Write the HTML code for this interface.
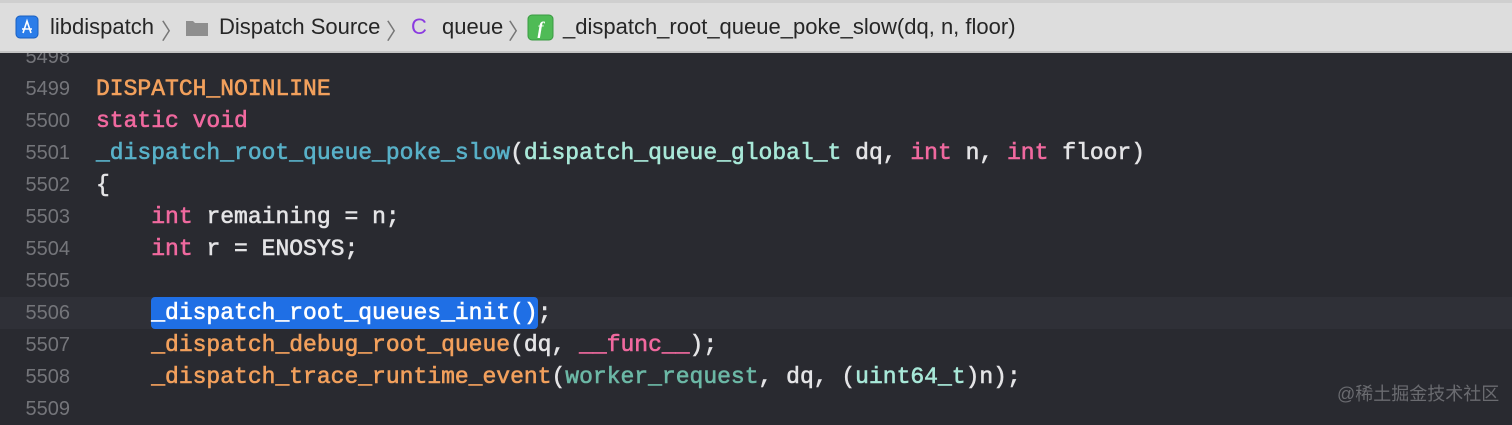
<!DOCTYPE html>
<html><head><meta charset="utf-8"><style>
html,body{margin:0;padding:0}
body{width:1512px;height:420px;overflow:hidden;background:#292a30;position:relative;font-family:"Liberation Sans",sans-serif}
#hdr{position:absolute;left:0;top:0;width:1512px;height:53px;background:#dddddd;border-top:3px solid #cfcfcf;box-sizing:border-box;border-bottom:2px solid #c4c4c4;z-index:2;font-size:22px;color:#262626}
#hdr span{position:absolute;top:11px;white-space:nowrap}
.code{position:absolute;left:0;top:41px;width:1512px;font-family:"Liberation Mono",monospace;font-size:23px;line-height:32px;color:#e4e4e6;font-weight:normal;-webkit-text-stroke:0.6px currentColor}
.ln{position:absolute;left:0;width:70px;text-align:right;color:#74757a;font-family:"Liberation Sans",sans-serif;font-size:20px;-webkit-text-stroke:0}
.tx{position:absolute;left:96px;white-space:pre}
.o{color:#f2a05c}.p{color:#f0699f}.t{color:#a8e8d8}.f{color:#58b1c8}.g{color:#6cb8a6}
.sel{background:#1f6fe5;color:#fff;border-radius:4px}
</style></head><body>
<div id="hdr">
<svg style="position:absolute;left:15px;top:12px" width="24" height="24"><rect x="1" y="1" width="22" height="22" rx="4" fill="#2b7de9" stroke="#1a5fc0"/><path d="M8 18 L12 6 L16 18 M7 14 H17" stroke="#fff" stroke-width="1.6" fill="none"/></svg>
<span style="left:50px">libdispatch</span>
<span style="left:161px;color:#777">〉</span>
<svg style="position:absolute;left:185px;top:15px" width="24" height="20"><path d="M1 3h7l2 2h13v13H1z" fill="#8e8e8e"/></svg>
<span style="left:219px">Dispatch Source</span>
<span style="left:386px;color:#777">〉</span>
<span style="left:411px;color:#8a3ae0">C</span>
<span style="left:442px">queue</span>
<span style="left:508px;color:#777">〉</span>
<svg style="position:absolute;left:527px;top:11px" width="27" height="27"><rect x="1" y="1" width="25" height="25" rx="4" fill="#4fbb56" stroke="#3a9a42"/><text x="13.5" y="20" font-family="Liberation Serif" font-style="italic" font-weight="bold" font-size="18" fill="#fff" text-anchor="middle">f</text></svg>
<span style="left:563px">_dispatch_root_queue_poke_slow(dq, n, floor)</span>
</div>
<div style="position:absolute;left:0;top:297px;width:1512px;height:32px;background:#2f3037"></div>
<div class="code">
<div class="ln" style="top:0">5498</div>
<div class="ln" style="top:32px">5499</div><div class="tx o" style="top:32px">DISPATCH_NOINLINE</div>
<div class="ln" style="top:64px">5500</div><div class="tx p" style="top:64px">static void</div>
<div class="ln" style="top:96px">5501</div><div class="tx" style="top:96px"><span class="f">_dispatch_root_queue_poke_slow</span>(<span class="t">dispatch_queue_global_t</span> dq, <span class="p">int</span> n, <span class="p">int</span> floor)</div>
<div class="ln" style="top:128px">5502</div><div class="tx" style="top:128px">{</div>
<div class="ln" style="top:160px">5503</div><div class="tx" style="top:160px">    <span class="p">int</span> remaining = n;</div>
<div class="ln" style="top:192px">5504</div><div class="tx" style="top:192px">    <span class="p">int</span> r = ENOSYS;</div>
<div class="ln" style="top:224px">5505</div>
<div class="ln" style="top:256px">5506</div><div class="tx" style="top:256px">    <span class="sel" style="padding:3px 0">_dispatch_root_queues_init()</span>;</div>
<div class="ln" style="top:288px">5507</div><div class="tx" style="top:288px">    <span class="o">_dispatch_debug_root_queue</span>(dq, <span class="p">__func__</span>);</div>
<div class="ln" style="top:320px">5508</div><div class="tx" style="top:320px">    <span class="o">_dispatch_trace_runtime_event</span>(<span class="g">worker_request</span>, dq, (<span class="t">uint64_t</span>)n);</div>
<div class="ln" style="top:352px">5509</div>
</div>
<div style="position:absolute;left:1337px;top:380px;font-family:'Liberation Sans','Noto Sans CJK SC',sans-serif;font-size:18px;color:#6a6b70">@稀土掘金技术社区</div>
</body></html>
